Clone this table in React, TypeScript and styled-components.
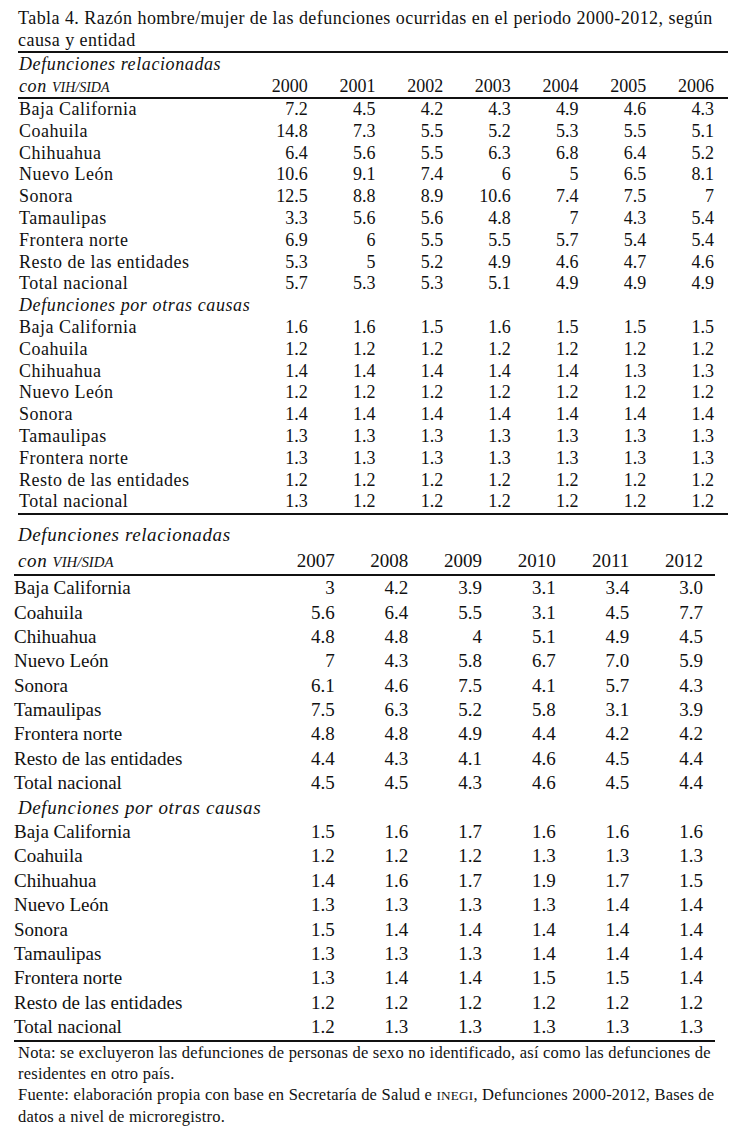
import React from "react";
import styled, { createGlobalStyle } from "styled-components";

const Global = createGlobalStyle`
  html, body { margin: 0; padding: 0; background: #fff; }
  body { font-family: "Liberation Serif", "Times New Roman", serif; color: #111; }
`;

const Page = styled.div`
  width: 742px;
  padding-top: 7px;
  display: flex;
  flex-direction: column;
`;

const Title = styled.div`
  margin-left: 18px;
  font-size: 18px;
  line-height: 22px;
  letter-spacing: 0.45px;
  span { display: block; white-space: nowrap; }
`;

const Table = styled.div<{ $left: number; $width: number; $fs: number; $gap: number }>`
  margin-left: ${(p) => p.$left}px;
  margin-top: ${(p) => p.$gap}px;
  width: ${(p) => p.$width}px;
  font-size: ${(p) => p.$fs}px;
  display: flex;
  flex-direction: column;
`;

const Rule = styled.div`
  height: 2px;
  background: #111;
`;

const Row = styled.div<{ $label: number; $cols: number; $h: number }>`
  display: grid;
  grid-template-columns: ${(p) => p.$label}px repeat(${(p) => p.$cols}, 1fr);
  height: ${(p) => p.$h}px;
  line-height: ${(p) => p.$h}px;
  white-space: nowrap;
`;

const Label = styled.div<{ $pad: number; $ls: number }>`
  padding-left: ${(p) => p.$pad}px;
  letter-spacing: ${(p) => p.$ls}px;
`;

const Section = styled.div<{ $pad: number; $ls: number }>`
  font-style: italic;
  padding-left: ${(p) => p.$pad}px;
  letter-spacing: ${(p) => p.$ls}px;
`;

const Small = styled.span`
  font-size: 0.78em;
  letter-spacing: 0;
`;

const Num = styled.div<{ $pr: number }>`
  text-align: right;
  padding-right: ${(p) => p.$pr}px;
`;

const Notes = styled.div`
  margin-left: 18px;
  font-size: 16.5px;
  line-height: 21px;
  letter-spacing: 0.22px;
  span { display: block; white-space: nowrap; }
`;

const SmallCaps = styled.span`
  font-size: 0.8em;
  display: inline !important;
`;

type Data = [string, string[]][];

const topVih: Data = [
  ["Baja California", ["7.2", "4.5", "4.2", "4.3", "4.9", "4.6", "4.3"]],
  ["Coahuila", ["14.8", "7.3", "5.5", "5.2", "5.3", "5.5", "5.1"]],
  ["Chihuahua", ["6.4", "5.6", "5.5", "6.3", "6.8", "6.4", "5.2"]],
  ["Nuevo León", ["10.6", "9.1", "7.4", "6", "5", "6.5", "8.1"]],
  ["Sonora", ["12.5", "8.8", "8.9", "10.6", "7.4", "7.5", "7"]],
  ["Tamaulipas", ["3.3", "5.6", "5.6", "4.8", "7", "4.3", "5.4"]],
  ["Frontera norte", ["6.9", "6", "5.5", "5.5", "5.7", "5.4", "5.4"]],
  ["Resto de las entidades", ["5.3", "5", "5.2", "4.9", "4.6", "4.7", "4.6"]],
  ["Total nacional", ["5.7", "5.3", "5.3", "5.1", "4.9", "4.9", "4.9"]],
];

const rep = (v: string, n: number) => Array(n).fill(v);

const topOtras: Data = [
  ["Baja California", ["1.6", "1.6", "1.5", "1.6", "1.5", "1.5", "1.5"]],
  ["Coahuila", rep("1.2", 7)],
  ["Chihuahua", ["1.4", "1.4", "1.4", "1.4", "1.4", "1.3", "1.3"]],
  ["Nuevo León", rep("1.2", 7)],
  ["Sonora", rep("1.4", 7)],
  ["Tamaulipas", rep("1.3", 7)],
  ["Frontera norte", rep("1.3", 7)],
  ["Resto de las entidades", rep("1.2", 7)],
  ["Total nacional", ["1.3", "1.2", "1.2", "1.2", "1.2", "1.2", "1.2"]],
];

const botVih: Data = [
  ["Baja California", ["3", "4.2", "3.9", "3.1", "3.4", "3.0"]],
  ["Coahuila", ["5.6", "6.4", "5.5", "3.1", "4.5", "7.7"]],
  ["Chihuahua", ["4.8", "4.8", "4", "5.1", "4.9", "4.5"]],
  ["Nuevo León", ["7", "4.3", "5.8", "6.7", "7.0", "5.9"]],
  ["Sonora", ["6.1", "4.6", "7.5", "4.1", "5.7", "4.3"]],
  ["Tamaulipas", ["7.5", "6.3", "5.2", "5.8", "3.1", "3.9"]],
  ["Frontera norte", ["4.8", "4.8", "4.9", "4.4", "4.2", "4.2"]],
  ["Resto de las entidades", ["4.4", "4.3", "4.1", "4.6", "4.5", "4.4"]],
  ["Total nacional", ["4.5", "4.5", "4.3", "4.6", "4.5", "4.4"]],
];

const botOtras: Data = [
  ["Baja California", ["1.5", "1.6", "1.7", "1.6", "1.6", "1.6"]],
  ["Coahuila", ["1.2", "1.2", "1.2", "1.3", "1.3", "1.3"]],
  ["Chihuahua", ["1.4", "1.6", "1.7", "1.9", "1.7", "1.5"]],
  ["Nuevo León", ["1.3", "1.3", "1.3", "1.3", "1.4", "1.4"]],
  ["Sonora", ["1.5", "1.4", "1.4", "1.4", "1.4", "1.4"]],
  ["Tamaulipas", ["1.3", "1.3", "1.3", "1.4", "1.4", "1.4"]],
  ["Frontera norte", ["1.3", "1.4", "1.4", "1.5", "1.5", "1.4"]],
  ["Resto de las entidades", rep("1.2", 6)],
  ["Total nacional", ["1.2", "1.3", "1.3", "1.3", "1.3", "1.3"]],
];

type Cfg = {
  left: number;
  width: number;
  fs: number;
  label: number;
  rowH: number;
  headH: number;
  pr: number;
  labelPad: number;
  labelLs: number;
  secPad: number;
  secLs: number;
  years: string[];
  vih: Data;
  otras: Data;
  topRule: boolean;
  gap: number;
};

const DataTable: React.FC<{ c: Cfg }> = ({ c }) => {
  const n = c.years.length;
  const rows = (d: Data) =>
    d.map(([name, vals]) => (
      <Row key={name} $label={c.label} $cols={n} $h={c.rowH}>
        <Label $pad={c.labelPad} $ls={c.labelLs}>{name}</Label>
        {vals.map((v, i) => (
          <Num key={i} $pr={c.pr}>{v}</Num>
        ))}
      </Row>
    ));
  return (
    <Table $left={c.left} $width={c.width} $fs={c.fs} $gap={c.gap}>
      {c.topRule && <Rule />}
      <Row $label={c.label} $cols={n} $h={c.headH}>
        <Section $pad={c.secPad} $ls={c.secLs}>Defunciones relacionadas</Section>
      </Row>
      <Row $label={c.label} $cols={n} $h={c.headH}>
        <Section $pad={c.secPad} $ls={c.secLs}>
          con <Small>VIH/SIDA</Small>
        </Section>
        {c.years.map((y) => (
          <Num key={y} $pr={c.pr}>{y}</Num>
        ))}
      </Row>
      <Rule />
      {rows(c.vih)}
      <Row $label={c.label} $cols={n} $h={c.rowH}>
        <Section $pad={c.secPad} $ls={c.secLs}>Defunciones por otras causas</Section>
      </Row>
      {rows(c.otras)}
      <Rule />
    </Table>
  );
};

const topCfg: Cfg = {
  left: 18,
  width: 710,
  fs: 18,
  label: 236,
  rowH: 21.8,
  headH: 22,
  pr: 14,
  labelPad: 1,
  labelLs: 0.5,
  secPad: 1,
  secLs: 0.6,
  years: ["2000", "2001", "2002", "2003", "2004", "2005", "2006"],
  vih: topVih,
  otras: topOtras,
  topRule: true,
  gap: 0,
};

const botCfg: Cfg = {
  left: 14,
  width: 701,
  fs: 19,
  label: 259,
  rowH: 24.4,
  headH: 26,
  pr: 12,
  labelPad: 0,
  labelLs: 0,
  secPad: 4,
  secLs: 0.6,
  years: ["2007", "2008", "2009", "2010", "2011", "2012"],
  vih: botVih,
  otras: botOtras,
  topRule: false,
  gap: 7,
};

export default function App() {
  return (
    <Page>
      <Global />
      <Title>
        <span>Tabla 4. Razón hombre/mujer de las defunciones ocurridas en el periodo 2000-2012, según</span>
        <span>causa y entidad</span>
      </Title>
      <DataTable c={topCfg} />
      <DataTable c={botCfg} />
      <Notes>
        <span>Nota: se excluyeron las defunciones de personas de sexo no identificado, así como las defunciones de</span>
        <span>residentes en otro país.</span>
        <span>
          Fuente: elaboración propia con base en Secretaría de Salud e <SmallCaps>INEGI</SmallCaps>, Defunciones 2000-2012, Bases de
        </span>
        <span>datos a nivel de microregistro.</span>
      </Notes>
    </Page>
  );
}
